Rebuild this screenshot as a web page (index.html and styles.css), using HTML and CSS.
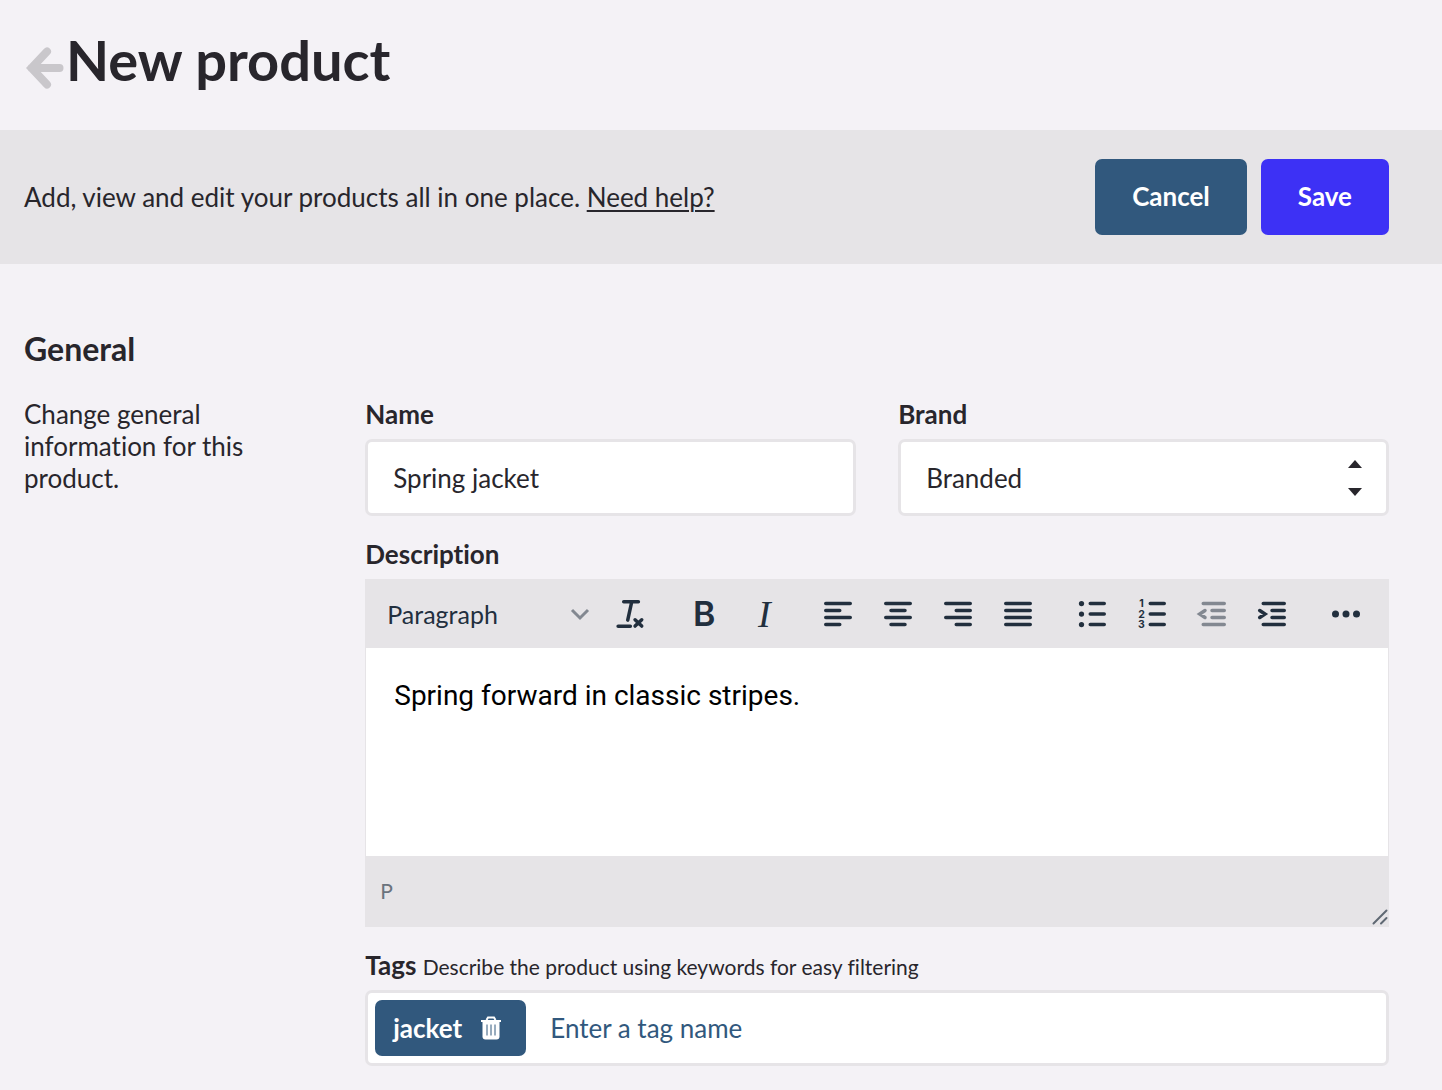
FILE: index.html
```html
<!DOCTYPE html>
<html lang="en">

<head>
  <meta charset="UTF-8">
  <meta name="viewport" content="width=device-width, initial-scale=1">
  <title>New product</title>
  <link rel="stylesheet" href="styles.css">
</head>

<body>
  <header class="page-header">
    <a class="back" href="#" aria-label="Back">
      <svg width="38" height="42" viewBox="0 0 38 42">
        <path d="M21 4.500L5.500 21l15.500 16.500M5.500 21h28" />
      </svg>
    </a>
    <h1>New product</h1>
  </header>

  <div class="action-bar">
    <p>Add, view and edit your products all in one place. <a href="#">Need help?</a></p>
    <div class="actions">
      <button type="button" class="btn">Cancel</button>
      <button type="submit" class="btn btn-primary" form="product">Save</button>
    </div>
  </div>

  <main>
    <h2>General</h2>
    <div class="section">
      <p class="section-info">Change general information for this product.</p>

      <form id="product" class="fields">
        <div class="row">
          <div class="field">
            <label for="name">Name</label>
            <input type="text" id="name" class="control" value="Spring jacket">
          </div>
          <div class="field">
            <label for="brand">Brand</label>
            <div class="select">
              <select id="brand" class="control">
                <option>Branded</option>
              </select>
              <svg class="select-arrows" width="14" height="36" viewBox="0 0 14 36">
                <path d="M7 0l7 8H0zM7 36l7-8H0z" />
              </svg>
            </div>
          </div>
        </div>

        <div class="field">
          <label for="description">Description</label>
          <div class="editor">
            <div class="toolbar">
              <div class="format">
                <select aria-label="Block format">
                  <option>Paragraph</option>
                </select>
                <svg class="format-arrow" width="20" height="14" viewBox="0 0 20 14">
                  <path d="M2 3l8 8 8-8" />
                </svg>
              </div>
              <div class="group">
                <button type="button" aria-label="Clear formatting">
                  <svg viewBox="0 0 24 24"><path d="M8.400 5h8.400M5.200 19h7M13 5l-2.300 10.500M14.900 15.300l3.800 3.600M18.700 15.300l-3.800 3.600" /></svg>
                </button>
              </div>
              <div class="group">
                <button type="button" class="bold" aria-label="Bold">B</button>
                <button type="button" class="italic" aria-label="Italic">I</button>
              </div>
              <div class="group">
                <button type="button" aria-label="Align left">
                  <svg viewBox="0 0 24 24"><path d="M5 6h14M5 10h8M5 14h14M5 18h8" /></svg>
                </button>
                <button type="button" aria-label="Align center">
                  <svg viewBox="0 0 24 24"><path d="M5 6h14M8 10h8M5 14h14M8 18h8" /></svg>
                </button>
                <button type="button" aria-label="Align right">
                  <svg viewBox="0 0 24 24"><path d="M5 6h14M11 10h8M5 14h14M11 18h8" /></svg>
                </button>
                <button type="button" aria-label="Justify">
                  <svg viewBox="0 0 24 24"><path d="M5 6h14M5 10h14M5 14h14M5 18h14" /></svg>
                </button>
              </div>
              <div class="group">
                <button type="button" aria-label="Bullet list">
                  <svg viewBox="0 0 24 24">
                    <path d="M11 6h8M11 12h8M11 18h8" />
                    <g class="solid"><circle cx="6" cy="6" r="1.500" /><circle cx="6" cy="12" r="1.500" /><circle cx="6" cy="18" r="1.500" /></g>
                  </svg>
                </button>
                <button type="button" aria-label="Numbered list">
                  <svg viewBox="0 0 24 24">
                    <path d="M11 6h8M11 12h8M11 18h8" />
                    <g class="digits"><text x="6" y="8">1</text><text x="6" y="14">2</text><text x="6" y="20">3</text></g>
                  </svg>
                </button>
                <button type="button" aria-label="Outdent" disabled>
                  <svg viewBox="0 0 24 24"><path d="M7 6h12M12 10h7M12 14h7M7 18h12M8 10l-3 2 3 2" /></svg>
                </button>
                <button type="button" aria-label="Indent">
                  <svg viewBox="0 0 24 24"><path d="M7 6h12M12 10h7M12 14h7M7 18h12M5 10l3 2-3 2" /></svg>
                </button>
              </div>
              <div class="group">
                <button type="button" aria-label="More">
                  <svg viewBox="0 0 24 24"><g class="solid"><circle cx="6" cy="12" r="2" /><circle cx="12" cy="12" r="2" /><circle cx="18" cy="12" r="2" /></g></svg>
                </button>
              </div>
            </div>
            <textarea id="description">Spring forward in classic stripes.</textarea>
            <div class="statusbar">
              <span>P</span>
              <svg width="16" height="16" viewBox="0 0 16 16">
                <path d="M1.500 14.500l13-13M9 14.500L14.500 9" />
              </svg>
            </div>
          </div>
        </div>

        <div class="field">
          <label for="tags">Tags <small>Describe the product using keywords for easy filtering</small></label>
          <div class="tags">
            <button type="button" class="tag" aria-label="Remove jacket">jacket
              <svg width="22" height="24" viewBox="0 0 22 24">
                <path class="lid" d="M1 5h20M6.500 4L8 1.500h6L15.500 4" />
                <path d="M2.500 5h17v15.500a3 3 0 0 1-3 3h-11a3 3 0 0 1-3-3z" />
                <path class="slots" d="M7 8.500v11M11 8.500v11M15 8.500v11" />
              </svg>
            </button>
            <input type="text" id="tags" placeholder="Enter a tag name">
          </div>
        </div>
      </form>
    </div>
  </main>
</body>

</html>
```

FILE: styles.css
```css
* {
  box-sizing: border-box;
}

body {
  margin: 0;
  background: #f4f2f6;
  color: #28262c;
  font-family: Lato, sans-serif;
  font-size: 26px;
  line-height: 32px;
  font-variant-ligatures: none;
}

h1,
h2,
p {
  margin: 0;
}

button,
input,
select,
textarea {
  font: inherit;
  color: inherit;
}

button {
  border: none;
  cursor: pointer;
}

.page-header {
  display: flex;
  align-items: center;
  height: 130px;
  padding: 0 24px 10px;
}

.back {
  display: flex;
  padding-top: 16px;
}

.back svg {
  margin-left: 2px;
  margin-right: 2px;
  fill: none;
  stroke: #c9c7cb;
  stroke-width: 8;
  stroke-linecap: round;
}

h1 {
  font-size: 56px;
  line-height: 68px;
}

.action-bar {
  display: flex;
  align-items: center;
  justify-content: space-between;
  padding: 29px 53px 29px 24px;
  background: #e6e4e7;
}

.action-bar a {
  color: inherit;
  text-decoration-thickness: 2px;
  text-underline-offset: 3px;
}

.actions {
  display: flex;
  gap: 14px;
}

.btn {
  height: 76px;
  padding: 0 37px 2px;
  border-radius: 7px;
  background: #31587d;
  color: #fff;
  font-weight: bold;
}

.btn-primary {
  background: #3d31f5;
}

main {
  padding: 64px 53px 24px 24px;
}

h2 {
  font-size: 32px;
  line-height: 42px;
}

.section {
  display: grid;
  grid-template-columns: 1fr 3fr;
  padding-top: 28px;
}

.section-info {
  padding-right: 80px;
}

.fields {
  display: flex;
  flex-direction: column;
  gap: 22px;
}

.row {
  display: grid;
  grid-template-columns: 1fr 1fr;
  gap: 42px;
}

.field {
  display: flex;
  flex-direction: column;
  gap: 9px;
}

label {
  font-weight: bold;
}

label small {
  font-size: 21px;
  line-height: 24px;
  font-weight: normal;
}

.control {
  width: 100%;
  height: 77px;
  padding: 0 25px;
  border: 3px solid #e6e4e7;
  border-radius: 7px;
  background: #fff;
}

.select,
.format {
  position: relative;
}

select {
  appearance: none;
}

.select-arrows {
  position: absolute;
  top: 21px;
  right: 27px;
  fill: #28262c;
  pointer-events: none;
}

.editor {
  display: flex;
  flex-direction: column;
  border: 1px solid #e6e4e7;
  border-top: none;
  background: #e6e4e7;
  color: #222f3e;
}

.toolbar {
  display: flex;
  align-items: center;
  gap: 14px;
  height: 69px;
}

.format select {
  width: 220px;
  height: 60px;
  padding: 0 21px;
  border: none;
  background: transparent;
  font-size: 25px;
}

.format-arrow {
  position: absolute;
  top: 23px;
  right: -4px;
  fill: none;
  stroke: #222f3e;
  stroke-width: 3;
  opacity: 0.5;
  pointer-events: none;
}

.group {
  display: flex;
}

.group button {
  display: flex;
  align-items: center;
  justify-content: center;
  width: 60px;
  height: 60px;
  padding: 0;
  background: transparent;
}

.group svg {
  width: 42px;
  height: 42px;
  fill: none;
  stroke: currentColor;
  stroke-width: 2;
  stroke-linecap: round;
}

.group .solid,
.group .digits {
  fill: currentColor;
  stroke: none;
}

.group .digits {
  font: bold 6px Inter, sans-serif;
  text-anchor: middle;
}

.group button:disabled {
  color: #222f3e;
  opacity: 0.5;
}

.group .bold {
  font: 600 34px Inter, sans-serif;
}

.group .italic {
  font: italic 38px "Liberation Serif", serif;
}

.editor textarea {
  height: 208px;
  padding: 32px 28px;
  border: none;
  background: #fff;
  color: #000;
  font: 28px/32px Roboto, sans-serif;
  resize: none;
}

.statusbar {
  display: flex;
  align-items: center;
  justify-content: space-between;
  height: 70px;
  padding-left: 14px;
  color: #6b737d;
  font-size: 21px;
}

.statusbar svg {
  align-self: flex-end;
  margin-bottom: 1px;
  fill: none;
  stroke: #5f6873;
  stroke-width: 2;
  stroke-linecap: round;
}

.tags {
  display: flex;
  align-items: center;
  height: 76px;
  padding: 0 7px;
  border: 3px solid #e6e4e7;
  border-radius: 7px;
  background: #fff;
}

.tag {
  display: flex;
  align-items: center;
  gap: 18px;
  height: 56px;
  padding: 0 24px 0 18px;
  border-radius: 7px;
  background: #31587d;
  color: #fff;
  font-weight: bold;
}

.tag svg {
  fill: #fff;
}

.tag .lid {
  fill: none;
  stroke: #fff;
  stroke-width: 2;
}

.tag .slots {
  stroke: #31587d;
  stroke-width: 1;
}

.tags input {
  flex: 1;
  height: 56px;
  padding: 0 24px;
  border: none;
  background: transparent;
}

.tags input::placeholder {
  color: #31587d;
}
```
